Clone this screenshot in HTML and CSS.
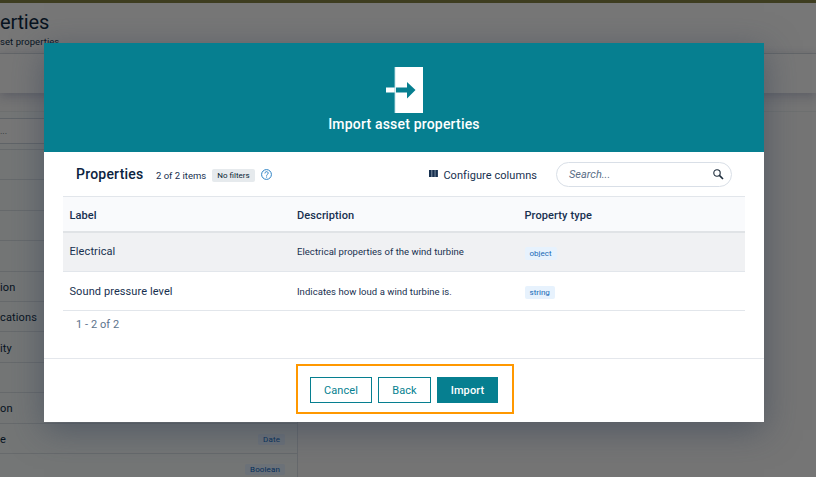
FILE: index.html
```html
<!DOCTYPE html>
<html lang="en">
<head>
<meta charset="utf-8">
<title>Import asset properties</title>
<link rel="stylesheet" href="styles.css">
</head>
<body>
<div class="page">
  <div class="topbar"></div>
  <header class="page-header">
    <h1>erties</h1>
    <p>set properties</p>
  </header>
  <div class="toolbar"></div>
  <main class="content">
    <section class="list">
      <div class="filter"><span>...</span></div>
      <ul>
        <li></li>
        <li></li>
        <li></li>
        <li></li>
        <li>ion</li>
        <li>cations</li>
        <li>ity</li>
        <li></li>
        <li>on</li>
        <li>e<span class="type">Date</span></li>
        <li><span class="type">Boolean</span></li>
      </ul>
    </section>
    <section class="detail"></section>
  </main>
</div>

<div class="modal">
  <div class="modal-header">
    <svg width="38" height="46" viewBox="0 0 38 46">
      <path fill="#fff" d="M9 0h28v46H9zM0 20.5h9v5H0z"/>
      <path fill="#067f90" d="M10 20.5h11V15l8.500 8-8.500 8.500v-6H10z"/>
      <path fill="#9fd0d7" d="M8.500 0h.8v46h-.8z"/>
    </svg>
    <h2>Import asset properties</h2>
  </div>
  <div class="modal-body">
    <div class="grid-header">
      <h3>Properties</h3>
      <span class="count">2 of 2 items</span>
      <span class="tag">No filters</span>
      <svg class="help" width="11" height="11" viewBox="0 0 11 11" fill="none" stroke="#2b80c4">
        <circle cx="5.500" cy="5.500" r="4.900"/>
        <path d="M3.900 4.400c0-2.300 3.300-2.200 3.300-.2 0 1.200-1.600 1.100-1.600 2.500M5.600 7.500v1.100"/>
      </svg>
      <div class="configure">
        <svg width="9" height="7" viewBox="0 0 9 7"><path fill="#8292a5" d="M0 0h9v7H0z"/><path fill="#17304f" d="M0 0h2.300v7H0zM3.300 0h2.300v7H3.300zM6.500 0h2.300v7H6.500z"/></svg>
        <span>Configure columns</span>
      </div>
      <div class="search">
        <span>Search...</span>
        <svg width="11" height="11" viewBox="0 0 11 11" fill="none" stroke="#1c2b3a"><circle cx="4" cy="4" r="3.200" stroke-width="1.100"/><path stroke-width="1.600" d="M6.400 6.400L10 10"/></svg>
      </div>
    </div>
    <div class="table">
      <div class="row head"><span>Label</span><span>Description</span><span>Property type</span></div>
      <div class="row active"><span class="label">Electrical</span><span class="desc">Electrical properties of the wind turbine</span><span><b class="badge">object</b></span></div>
      <div class="row"><span class="label">Sound pressure level</span><span class="desc">Indicates how loud a wind turbine is.</span><span><b class="badge">string</b></span></div>
    </div>
    <div class="pager">1 - 2 of 2</div>
  </div>
  <div class="modal-footer">
    <div class="actions">
      <button class="cancel">Cancel</button>
      <button class="back">Back</button>
      <button class="import">Import</button>
    </div>
  </div>
</div>
</body>
</html>
```
FILE: styles.css
```css
* { box-sizing: border-box; }
body {
  margin: 0;
  width: 816px;
  height: 477px;
  overflow: hidden;
  position: relative;
  font-family: Roboto, "Liberation Sans", sans-serif;
  font-size: 11px;
  color: #17304f;
}
h1, h2, h3, p, ul { margin: 0; padding: 0; }
svg { display: block; flex: none; }

/* dimmed page */
.page { height: 477px; background: #757575; overflow: hidden; display: flex; flex-direction: column; }
.topbar { height: 3px; background: #3e3d20; flex: none; }
.page-header {
  height: 51px;
  flex: none;
  padding-top: 7px;
  background: #777;
  border-bottom: 1px solid #686a6c;
  color: #07131f;
}
.page-header h1 { font-size: 20px; line-height: 25px; font-weight: 400; letter-spacing: -.2px; }
.page-header p { font-size: 9.5px; line-height: 14px; letter-spacing: .06px; }
.toolbar { height: 39px; flex: none; background: #777; box-shadow: 0 3px 10px rgba(35, 40, 65, .3); position: relative; }
.content { display: flex; flex: none; margin-top: 18px; height: 380px; border-top: 1px solid #6e7070; }
.list { width: 298px; background: #747676; border-right: 1px solid #66696c; padding-top: 6px; }
.filter { height: 26px; background: #777; border: solid #606468; border-width: 1px 0; color: #2c3034; line-height: 25px; font-size: 9px; }
.list ul { list-style: none; margin-top: 5px; border-top: 1px solid #676a6c; }
.list li {
  height: 30.4px;
  display: flex;
  align-items: center;
  padding-top: 2px;
  padding-right: 12px;
  border-bottom: 1px solid #676a6c;
  color: #07131f;
  letter-spacing: .15px;
}
.type { margin-left: auto; padding: 0 5px; border-radius: 2px; background: #6c7279; color: #062f5b; font-size: 8px; line-height: 11px; letter-spacing: .12px; }

/* dialog */
.modal {
  position: absolute;
  left: 44px;
  top: 43px;
  width: 720px;
  height: 379px;
  display: flex;
  flex-direction: column;
  background: #fff;
  box-shadow: 0 8px 32px rgba(45, 60, 82, .5);
}
.modal-header {
  height: 109px;
  padding-top: 24px;
  background: #067f90;
  display: flex;
  flex-direction: column;
  align-items: center;
}
.modal-header svg { margin-left: 2px; }
.modal-header h2 { color: #fff; font-size: 14px; line-height: 22px; font-weight: 500; letter-spacing: .19px; }
.modal-body { height: 206px; padding: 0 19px; }
.grid-header { height: 44px; display: flex; align-items: center; padding: 0 13px; }
.grid-header h3 { width: 80px; font-size: 14px; font-weight: 500; letter-spacing: .22px; color: #0c2340; }
.count { width: 56px; font-size: 9.5px; padding-top: 3px; white-space: nowrap; }
.tag { width: 43px; height: 13px; margin-top: 2px; border-radius: 2px; background: #e6eaed; color: #081d33; font-size: 8px; line-height: 14px; text-align: center; }
.help { margin-left: 6px; }
.configure { margin-left: auto; margin-right: 19px; display: flex; align-items: center; gap: 5px; letter-spacing: .06px; }
.configure svg { margin-top: -1px; }
.configure span { padding-top: 2px; }
.search {
  width: 176px;
  height: 25px;
  border: 1px solid #d9dfe7;
  border-radius: 13px;
  padding: 0 7px 0 12px;
  display: flex;
  align-items: center;
  justify-content: space-between;
  font-style: italic;
  color: #5c6f87;
}
.search span { padding-top: 1px; }
.table { border-top: 1px solid #e2e6eb; }
.row {
  height: 39px;
  display: grid;
  grid-template-columns: 227.5px 227.5px 1fr;
  align-items: center;
  padding: 0 6px 0 6.5px;
  border-bottom: 1px solid #e2e6eb;
}
.row.head { height: 36px; padding-top: 2px; background: #f9fafc; border-bottom: 2px solid #e0e3e6; font-weight: 500; letter-spacing: .1px; }
.row.active { background: #f0f1f3; height: 39px; }
.row.active .label, .row.active .desc { position: relative; top: -1px; }
.label { letter-spacing: .09px; }
.desc { font-size: 9.5px; letter-spacing: .04px; }
.badge { display: inline-block; height: 13px; padding: 0 5px; margin-top: 3px; border-radius: 2px; background: #e7f2fd; color: #1769b5; font-size: 8px; line-height: 13px; font-weight: 400; vertical-align: middle; }
.pager { padding: 7px 13px; line-height: 13px; color: #5c738c; letter-spacing: .07px; }
.modal-footer { flex: 1; border-top: 1px solid #e4e7ec; padding-left: 252px; padding-top: 5px; }
.actions { width: 218px; height: 50px; border: 2px solid #ff9800; padding: 11px 12px; display: flex; gap: 6px; }
button {
  height: 26px;
  padding: 0;
  border: 1px solid #067f90;
  background: #fff;
  color: #067f90;
  font: 11px Roboto, "Liberation Sans", sans-serif;
  letter-spacing: .1px;
}
.cancel { width: 62px; }
.back { width: 53px; }
.import { width: 61px; background: #067f90; color: #fff; font-weight: 500; }
```
